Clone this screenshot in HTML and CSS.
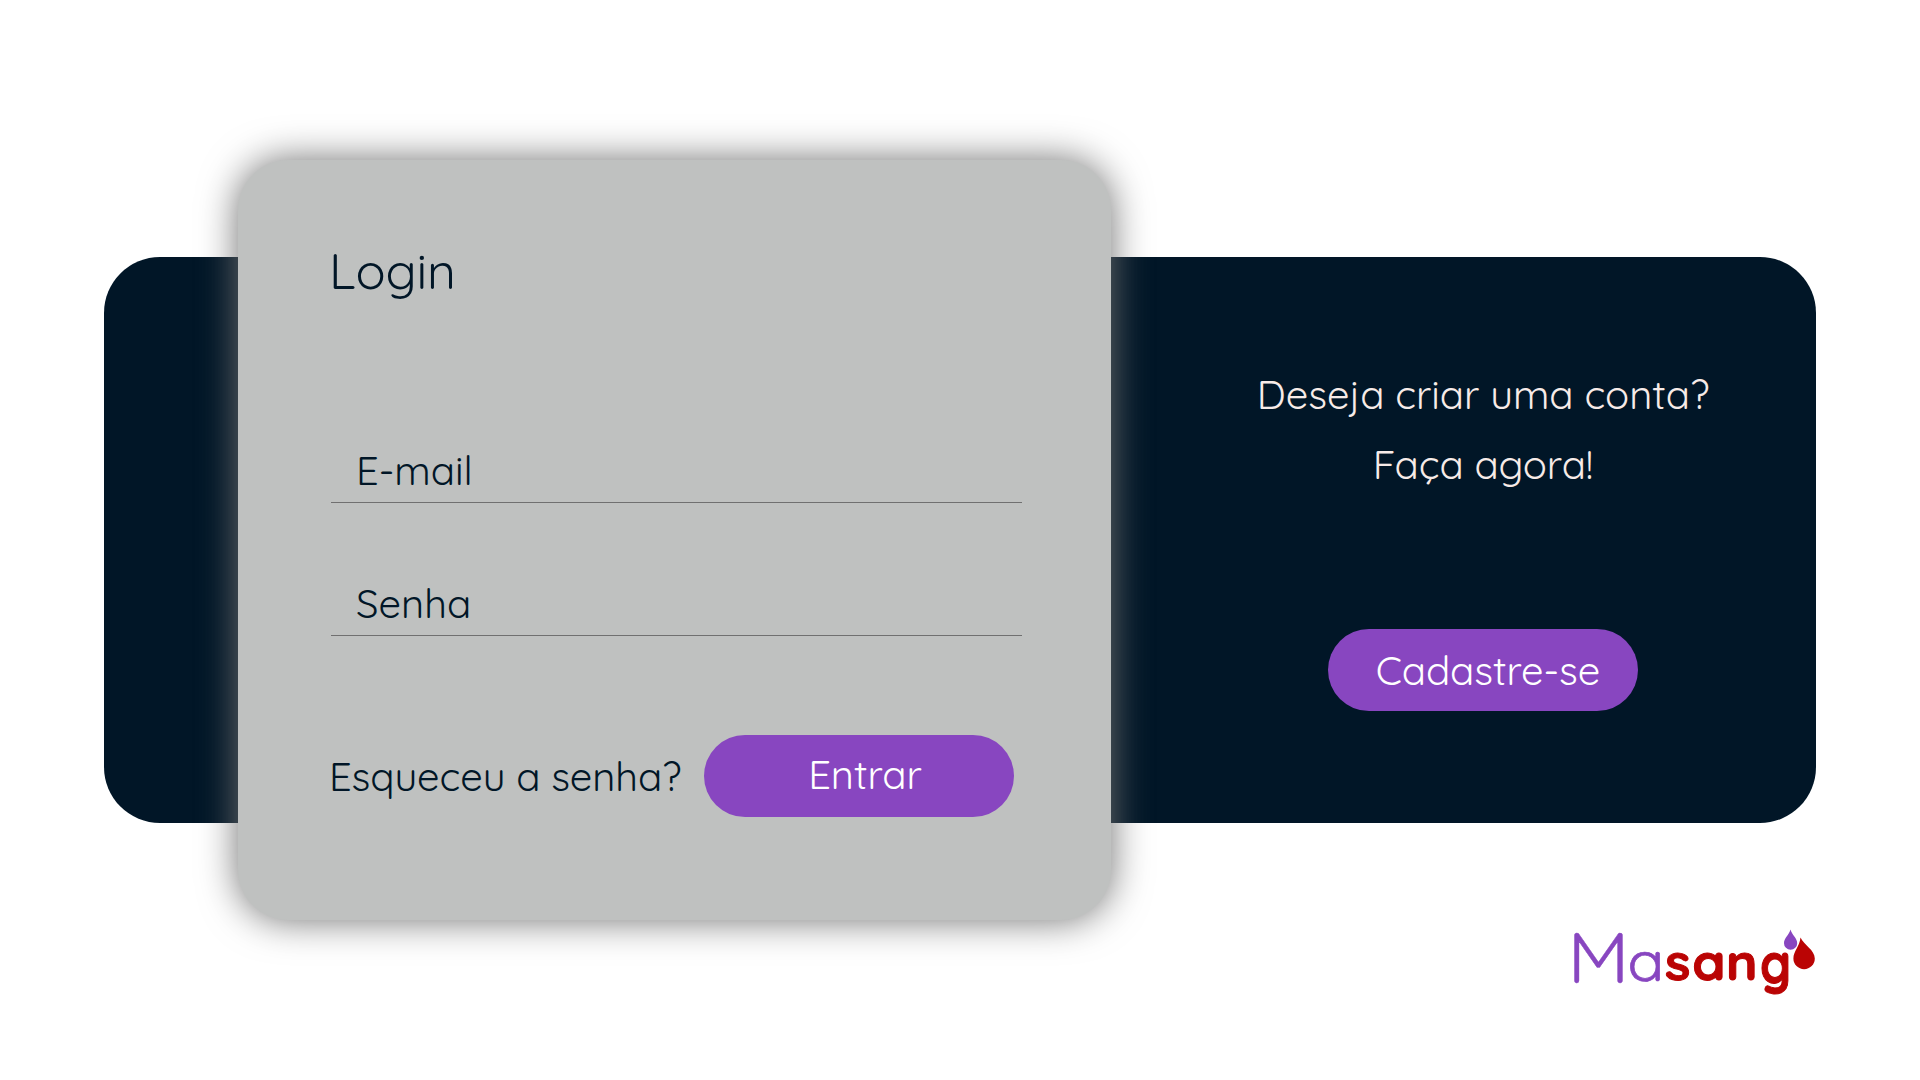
FILE: index.html
```html
<!DOCTYPE html>
<html lang="pt-BR">
<head>
<meta charset="utf-8">
<title>Masang - Login</title>
<link rel="stylesheet" href="styles.css">
</head>
<body>
<main class="panel">
  <form class="card">
    <h1 class="title">Login</h1>
    <input class="field email" type="email" placeholder="E-mail" aria-label="E-mail">
    <input class="field senha" type="password" placeholder="Senha" aria-label="Senha">
    <div class="actions">
      <a class="forgot">Esqueceu a senha?</a>
      <button class="button enter" type="button">Entrar</button>
    </div>
  </form>
  <section class="signup">
    <p class="invite">Deseja criar uma conta?<br>Faça agora!</p>
    <button class="button register" type="button">Cadastre-se</button>
  </section>
</main>
<footer class="footer">
  <svg class="logo" width="283" height="100" viewBox="0 0 283 100" role="img" aria-label="Masang">
    <text class="logo-m" transform="translate(.5 62) scale(1.07 1)">M</text>
    <text class="logo-a" transform="translate(60.500 59.800) scale(1.08 1)">a</text>
    <text class="logo-sang" x="0 27.300 61" transform="translate(98 59.400) scale(1 .93)">san</text>
    <text class="logo-sang" transform="translate(193 61.500) scale(.92 1.02)">g</text>
    <path class="drop-purple" d="M223.500 8.500C225 14 230.200 17 230.200 22.200A6.600 6.600 0 0 1 217 22.200C217 17 222 14 223.500 8.500Z"/>
    <path class="drop-red" d="M233.500 16.500C237 24 247.800 29 247.800 37.500A10.700 10.700 0 0 1 226.400 37.500C226.400 30 232.500 26 233.500 16.500Z"/>
  </svg>
</footer>
</body>
</html>
```
FILE: styles.css
```css
* { box-sizing: border-box; }

body {
  margin: 0;
  height: 1080px;
  overflow: hidden;
  background: #fff;
  color: #011627;
  font-family: Quicksand, Inter, "Liberation Sans", sans-serif;
  font-feature-settings: "cv11";
  font-weight: 400;
  font-size: 40px;
}

.panel {
  display: flex;
  align-items: flex-start;
  width: 1712px;
  height: 566px;
  margin: 257px 0 0 104px;
  border-radius: 56px;
  background: #011627;
}

.card {
  flex: none;
  width: 873px;
  height: 760px;
  margin: -97px 0 0 134px;
  padding: 81px 89px 0 93px;
  border-radius: 50px;
  background: #bfc1c0;
  box-shadow: 0 0 38px #707070;
}

.title {
  margin: 0 0 0 -2px;
  font-size: 50px;
  font-weight: 400;
  letter-spacing: -.2px;
  line-height: 60px;
}

.field {
  display: block;
  width: 691px;
  height: 60px;
  margin: 0 0 73px;
  padding: 0 0 5px 25px;
  border: 0;
  border-bottom: 1px solid #707070;
  border-radius: 0;
  outline: 0;
  background: none;
  font: inherit;
  font-feature-settings: inherit;
}

.field::placeholder { color: #011627; opacity: 1; }
.email { margin-top: 142px; }
.senha { margin-bottom: 99px; }

.actions {
  display: flex;
  justify-content: space-between;
  width: 683px;
}

.forgot { margin-left: -2px; letter-spacing: -.1px; line-height: 82px; white-space: nowrap; }

.button {
  width: 310px;
  height: 82px;
  padding: 0;
  border: 0;
  border-radius: 41px;
  background: #8846c0;
  color: #fff;
  font: inherit;
  letter-spacing: -.05px;
  font-feature-settings: inherit;
}

.enter { padding: 0 0 4px 12px; }

.signup {
  display: flex;
  flex: 1;
  flex-direction: column;
  align-items: center;
  padding: 102px 0 0 39px;
}

.invite {
  margin: 0 0 130px;
  color: #f7ebe8;
  letter-spacing: -.06px;
  line-height: 70px;
  text-align: center;
  white-space: nowrap;
}

.register { padding-left: 10px; }

.footer {
  display: flex;
  justify-content: flex-end;
  padding: 98px 70px 0 0;
}

.logo { display: block; overflow: visible; }
.logo-m, .logo-a { fill: #8846c0; font-weight: 400; }
.logo-m { font-size: 70px; stroke: #8846c0; stroke-width: .4px; stroke-linejoin: round; }
.logo-a { font-size: 56px; stroke: #8846c0; stroke-width: .7px; stroke-linejoin: round; }
.logo-sang { fill: #ba0404; stroke: #ba0404; stroke-width: 1px; stroke-linejoin: round; font-size: 53px; font-weight: 700; }
.drop-purple { fill: #8846c0; }
.drop-red { fill: #ba0404; }
```
